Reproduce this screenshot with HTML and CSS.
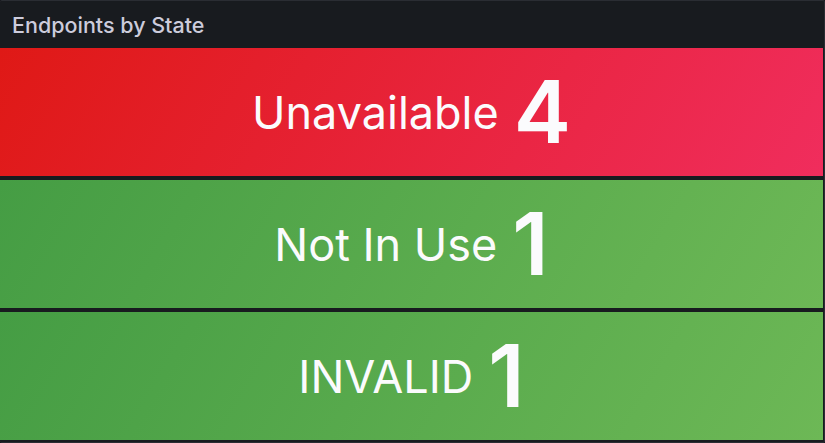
FILE: index.html
```html
<!DOCTYPE html>
<html lang="en">
<head>
  <meta charset="UTF-8" />
  <meta name="viewport" content="width=device-width, initial-scale=1.0"/>
  <title>Endpoints by State</title>
  <link rel="stylesheet" href="styles.css">
</head>
<body>

  <div class="panel">
    <div class="panel-header">
      <h2 class="panel-title">Endpoints by State</h2>
    </div>

    <div class="stat-list">
      <div class="stat stat-red">
        <span class="stat-name">Unavailable</span>
        <span class="stat-value">4</span>
      </div>
      <div class="stat stat-green">
        <span class="stat-name">Not In Use</span>
        <span class="stat-value">1</span>
      </div>
      <div class="stat stat-green">
        <span class="stat-name">INVALID</span>
        <span class="stat-value">1</span>
      </div>
    </div>
  </div>

</body>
</html>
```

FILE: styles.css
```css
body {
  margin: 0;
  background: #111217;
  font-family: Inter, "Noto Sans", Arial, sans-serif;
}

.panel {
  box-sizing: border-box;
  width: 825px;
  height: 443px;
  display: flex;
  flex-direction: column;
  background: #181b1f;
  border: 1px solid #2a2d33;
  border-left: none;
  border-radius: 2px;
  padding-bottom: 2px;
}

.panel-header {
  height: 47px;
  display: flex;
  align-items: center;
  padding: 0 12px;
  flex-shrink: 0;
}

.panel-title {
  margin: 0;
  font-size: 21.5px;
  font-weight: 500;
  color: #ccccdc;
}

.stat-list {
  flex: 1;
  display: flex;
  flex-direction: column;
  gap: 4px;
  padding-right: 1px;
}

.stat {
  flex: 1;
  display: flex;
  align-items: center;
  justify-content: center;
  gap: 15px;
  color: #fbfbfd;
}

.stat-red {
  background: linear-gradient(120deg, #df1916, #f02d5d);
}

.stat-green {
  background: linear-gradient(120deg, #459d44, #6db856);
}

.stat-name {
  font-size: 45px;
  font-weight: 400;
}

.stat-value {
  font-size: 86px;
  font-weight: 600;
}
```
